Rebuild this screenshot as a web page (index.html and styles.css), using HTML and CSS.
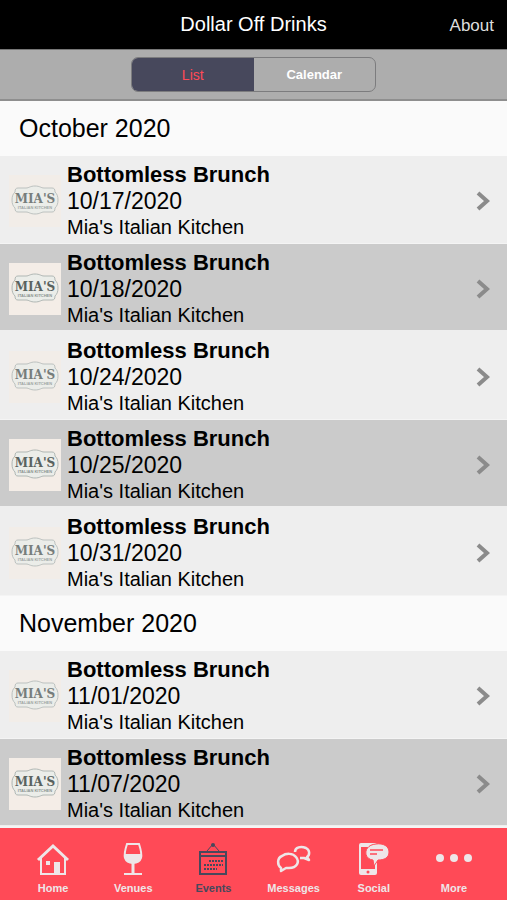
FILE: index.html
```html
<!DOCTYPE html>
<html lang="en">
<head>
    <meta charset="UTF-8">
    <meta name="viewport" content="width=device-width, initial-scale=1.0">
    <title>Dollar Off Drinks</title>
    <link rel="stylesheet" href="styles.css">
</head>
<body>
    <!-- Venue logo and arrow, shared by every event row -->
    <svg class="sprite" aria-hidden="true">
        <symbol id="venue-logo" viewBox="0 0 52 52">
            <rect width="52" height="52" fill="#f4ede7"/>
            <path d="M9 13 H17 C20 13 21 11 26 11 C31 11 32 13 35 13 H43 C45 13 46 14 46 17 C48 19 49 21 49 25 C49 29 48 31 46 33 C46 36 45 37 43 37 H35 C32 37 31 39 26 39 C21 39 20 37 17 37 H9 C7 37 6 36 6 33 C4 31 3 29 3 25 C3 21 4 19 6 17 C6 14 7 13 9 13 Z" fill="#ebede9" stroke="#b0b7b4"/>
            <text x="26" y="28" text-anchor="middle" class="logo-name">MIA'S</text>
            <text x="26" y="34" text-anchor="middle" class="logo-sub">ITALIAN KITCHEN</text>
        </symbol>
        <symbol id="arrow" viewBox="0 0 14 20">
            <path d="M2 2 L11 10 L2 18" fill="none" stroke="#8b8b8b" stroke-width="4"/>
        </symbol>
    </svg>

    <div class="app">
        <header class="header">
            <h1>Dollar Off Drinks</h1>
            <a class="about" href="#about">About</a>
        </header>

        <div class="toolbar">
            <div class="switch">
                <button type="button" class="active" aria-pressed="true">List</button>
                <button type="button" aria-pressed="false">Calendar</button>
            </div>
        </div>

        <main class="events" id="events"></main>

        <nav class="tabs">
            <a href="#home">
                <svg viewBox="0 0 36 36" fill="none" stroke="currentColor" stroke-width="2">
                    <path d="M3 20 L18 6 L33 20" stroke-width="3"/>
                    <path d="M6 18 V34 H30 V18"/>
                    <rect x="19" y="22" width="6" height="12" fill="currentColor" stroke="none"/>
                    <rect x="11" y="21" width="4" height="4" fill="currentColor" stroke="none"/>
                </svg>
                <span>Home</span>
            </a>
            <a href="#venues">
                <svg viewBox="0 0 36 36" fill="none" stroke="currentColor" stroke-width="2">
                    <path d="M12 4 H24 C26 10 27 14 26 18 C25 21 22 23 18 23 C14 23 11 21 10 18 C9 14 10 10 12 4 Z"/>
                    <path d="M10 14 H26 C27 20 23 23 18 23 C13 23 9 20 10 14 Z" fill="currentColor" stroke="none"/>
                    <path d="M18 22 V34" stroke-width="3"/>
                    <path d="M9 34 H27"/>
                </svg>
                <span>Venues</span>
            </a>
            <a href="#events" class="current" aria-current="page">
                <svg viewBox="0 0 36 36" fill="none" stroke="currentColor" stroke-width="2">
                    <path d="M12 11 L18 4 L24 11" stroke-width="1"/>
                    <circle cx="18" cy="5" r="2" fill="currentColor" stroke="none"/>
                    <rect x="5" y="12" width="26" height="22"/>
                    <path d="M5 16 H31"/>
                    <path d="M14 21 H28 M9 25 H28 M9 29 H22" stroke-dasharray="2 1"/>
                </svg>
                <span>Events</span>
            </a>
            <a href="#messages">
                <svg viewBox="0 0 36 36" fill="none" stroke="currentColor" stroke-width="2.5" stroke-linejoin="round">
                    <path d="M5 28 C1 25 1 18 6 16 C10 13 17 13 20 17 C24 22 21 28 13 28 L10 28 L5 31 Z"/>
                    <path d="M19 12 C19 7 25 6 30 8 C34 10 34 15 31 17 L33 20 L28 18 H24"/>
                </svg>
                <span>Messages</span>
            </a>
            <a href="#social">
                <svg viewBox="0 0 36 36">
                    <path fill="currentColor" fill-rule="evenodd" d="M5 3 H19 Q21 3 21 5 V33 Q21 35 19 35 H5 Q3 35 3 33 V5 Q3 3 5 3 Z M5 7 V29 H19 V7 Z"/>
                    <circle cx="12" cy="32" r="1.5" fill="#ff4a57"/>
                    <path d="M20 4 C27 3 33 6 33 12 C33 18 28 20 22 20 L18 26 L17 20 C7 19 7 5 20 4 Z" fill="currentColor" stroke="#ff4a57"/>
                    <path d="M14 10 H27 M14 14 H21" stroke="#ff4a57" stroke-width="1.5"/>
                </svg>
                <span>Social</span>
            </a>
            <a href="#more">
                <svg viewBox="0 0 36 36" fill="currentColor">
                    <circle cx="4" cy="18" r="4"/>
                    <circle cx="18" cy="18" r="4"/>
                    <circle cx="32" cy="18" r="4"/>
                </svg>
                <span>More</span>
            </a>
        </nav>
    </div>

    <script>
        const months = [
            { title: 'October 2020', dates: ['10/17/2020', '10/18/2020', '10/24/2020', '10/25/2020', '10/31/2020'] },
            { title: 'November 2020', dates: ['11/01/2020', '11/07/2020'] }
        ];

        // Build one section per month
        document.getElementById('events').innerHTML = months.map(month => `
            <section>
                <h2>${month.title}</h2>
                ${month.dates.map(date => `
                    <a class="event" href="#event">
                        <svg class="logo" aria-hidden="true"><use href="#venue-logo"/></svg>
                        <div class="info">
                            <h3>Bottomless Brunch</h3>
                            <p class="date">${date}</p>
                            <p class="venue">Mia's Italian Kitchen</p>
                        </div>
                        <svg class="arrow" aria-hidden="true"><use href="#arrow"/></svg>
                    </a>
                `).join('')}
            </section>
        `).join('');
    </script>
</body>
</html>
```

FILE: styles.css
```css
* {
    margin: 0;
    padding: 0;
    box-sizing: border-box;
    font-family: "Liberation Sans", Arial, sans-serif;
}

body {
    background: #fafafa;
    color: #000;
}

a {
    color: inherit;
    text-decoration: none;
}

.sprite {
    display: none;
}

.app {
    display: flex;
    flex-direction: column;
    height: 100vh;
}

.header {
    display: grid;
    grid-template-columns: 1fr auto 1fr;
    align-items: center;
    padding: 12px 13px 13px;
    background: #000;
    color: #fff;
}

.header h1 {
    grid-column: 2;
    font-size: 20px;
    font-weight: normal;
    line-height: 24px;
}

.about {
    justify-self: end;
    padding-top: 4px;
    color: #ddd;
    font-size: 17px;
    line-height: 20px;
}

.toolbar {
    display: flex;
    justify-content: center;
    padding: 7px 0;
    background: #adadad;
    border-top: 1px solid #777;
    border-bottom: 2px solid #8e8e8e;
}

.switch {
    display: flex;
    width: 245px;
    height: 35px;
    border: 1px solid #7c7c7e;
    border-radius: 7px;
    overflow: hidden;
}

.switch button {
    flex: 1;
    border: none;
    background: none;
    color: #fff;
    font-size: 13px;
    font-weight: bold;
    cursor: pointer;
}

.switch .active {
    background: #47485c;
    color: #ff4a57;
    font-size: 14px;
    font-weight: normal;
}

.events {
    flex: 1;
    min-height: 0;
    overflow: hidden;
}

.events h2 {
    padding: 12px 19px 13px;
    font-size: 25px;
    font-weight: normal;
    line-height: 30px;
}

.event {
    display: flex;
    align-items: center;
    gap: 6px;
    padding: 5px 17px 3px 9px;
    background: #eee;
    border-bottom: 1px solid #f4f4f4;
}

.event:nth-of-type(even) {
    background: #cbcbcb;
    border-bottom: 2px solid #eee;
    padding-bottom: 2px;
}

.event:nth-of-type(odd) .logo {
    opacity: 0.8;
}

.logo {
    width: 52px;
    height: 52px;
}

.logo-name {
    fill: #59625f;
    font-family: "DejaVu Serif", serif;
    font-size: 12px;
    font-weight: bold;
}

.logo-sub {
    fill: #8b9390;
    font-size: 4px;
    font-weight: bold;
}

.info {
    flex: 1;
}

.info h3 {
    font-size: 22px;
    line-height: 27px;
}

.date {
    font-size: 23px;
    line-height: 27px;
}

.venue {
    font-size: 20px;
    line-height: 25px;
}

.arrow {
    width: 14px;
    height: 20px;
}

.tabs {
    display: flex;
    padding: 12px 13px 4px;
    background: #ff4a57;
    border-top: 2px solid #f4f4f4;
    color: #eee6e8;
}

.tabs a {
    flex: 1;
    display: flex;
    flex-direction: column;
    align-items: center;
    gap: 4px;
    font-size: 11px;
    font-weight: bold;
    line-height: 16px;
}

.tabs svg {
    width: 36px;
    height: 36px;
}

.tabs .current {
    color: #47485c;
}
```
